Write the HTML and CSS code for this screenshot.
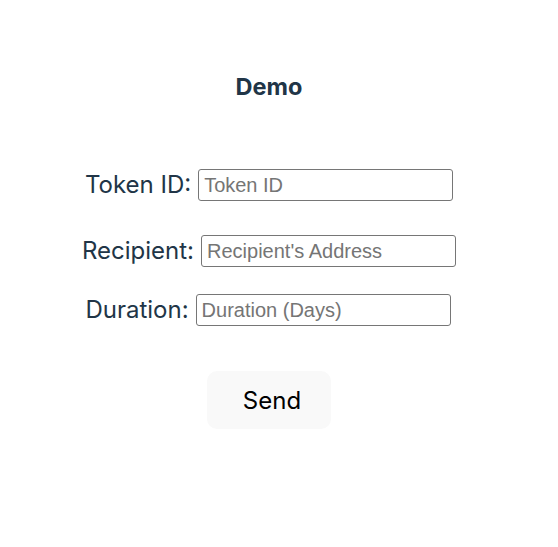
FILE: index.html
```html
<!DOCTYPE html>
<html>
<head>
<meta charset="utf-8">
<link rel="stylesheet" href="styles.css">
</head>
<body>
<div class="app">
  <h1 class="title">Demo</h1>
  <div class="form">
    <div class="row row-token">
      <label class="label">Token ID:</label>
      <input class="field" type="text" placeholder="Token ID">
    </div>
    <div class="row row-recipient">
      <label class="label">Recipient:</label>
      <input class="field" type="text" placeholder="Recipient's Address">
    </div>
    <div class="row row-duration">
      <label class="label">Duration:</label>
      <input class="field" type="text" placeholder="Duration (Days)">
    </div>
  </div>
  <button class="send">Send</button>
</div>
</body>
</html>
```

FILE: styles.css
```css
html, body {
  margin: 0;
  padding: 0;
  background: #ffffff;
}
body {
  font-family: Inter, "Noto Sans", sans-serif;
  color: #213547;
}
.app {
  display: flex;
  flex-direction: column;
  align-items: center;
  padding-right: 20px;
  padding-top: 72px;
}
.title {
  margin: 0;
  font-size: 23.5px;
  font-weight: 700;
  line-height: 30px;
}
.form {
  display: flex;
  flex-direction: column;
  align-items: center;
  margin-top: 67px;
}
.row {
  display: flex;
  align-items: center;
  gap: 7px;
}
.row-recipient {
  margin-top: 34px;
}
.row-duration {
  margin-top: 27px;
  margin-right: 2px;
}
.label {
  font-size: 24px;
  line-height: 30px;
}
.field {
  box-sizing: border-box;
  width: 255px;
  height: 32px;
  padding: 0 5px;
  border: 1px solid #767676;
  border-radius: 3px;
  font-family: "Liberation Sans", Arial, sans-serif;
  font-size: 20px;
  color: #000;
  background: #fff;
}
.field::placeholder {
  color: #757575;
}
.send {
  margin-top: 45px;
  width: 124px;
  height: 58px;
  padding: 0 0 0 6px;
  border: none;
  border-radius: 10px;
  background: #f9f9f9;
  font-family: Inter, "Noto Sans", sans-serif;
  font-size: 24px;
  color: #000;
  cursor: pointer;
}
```
